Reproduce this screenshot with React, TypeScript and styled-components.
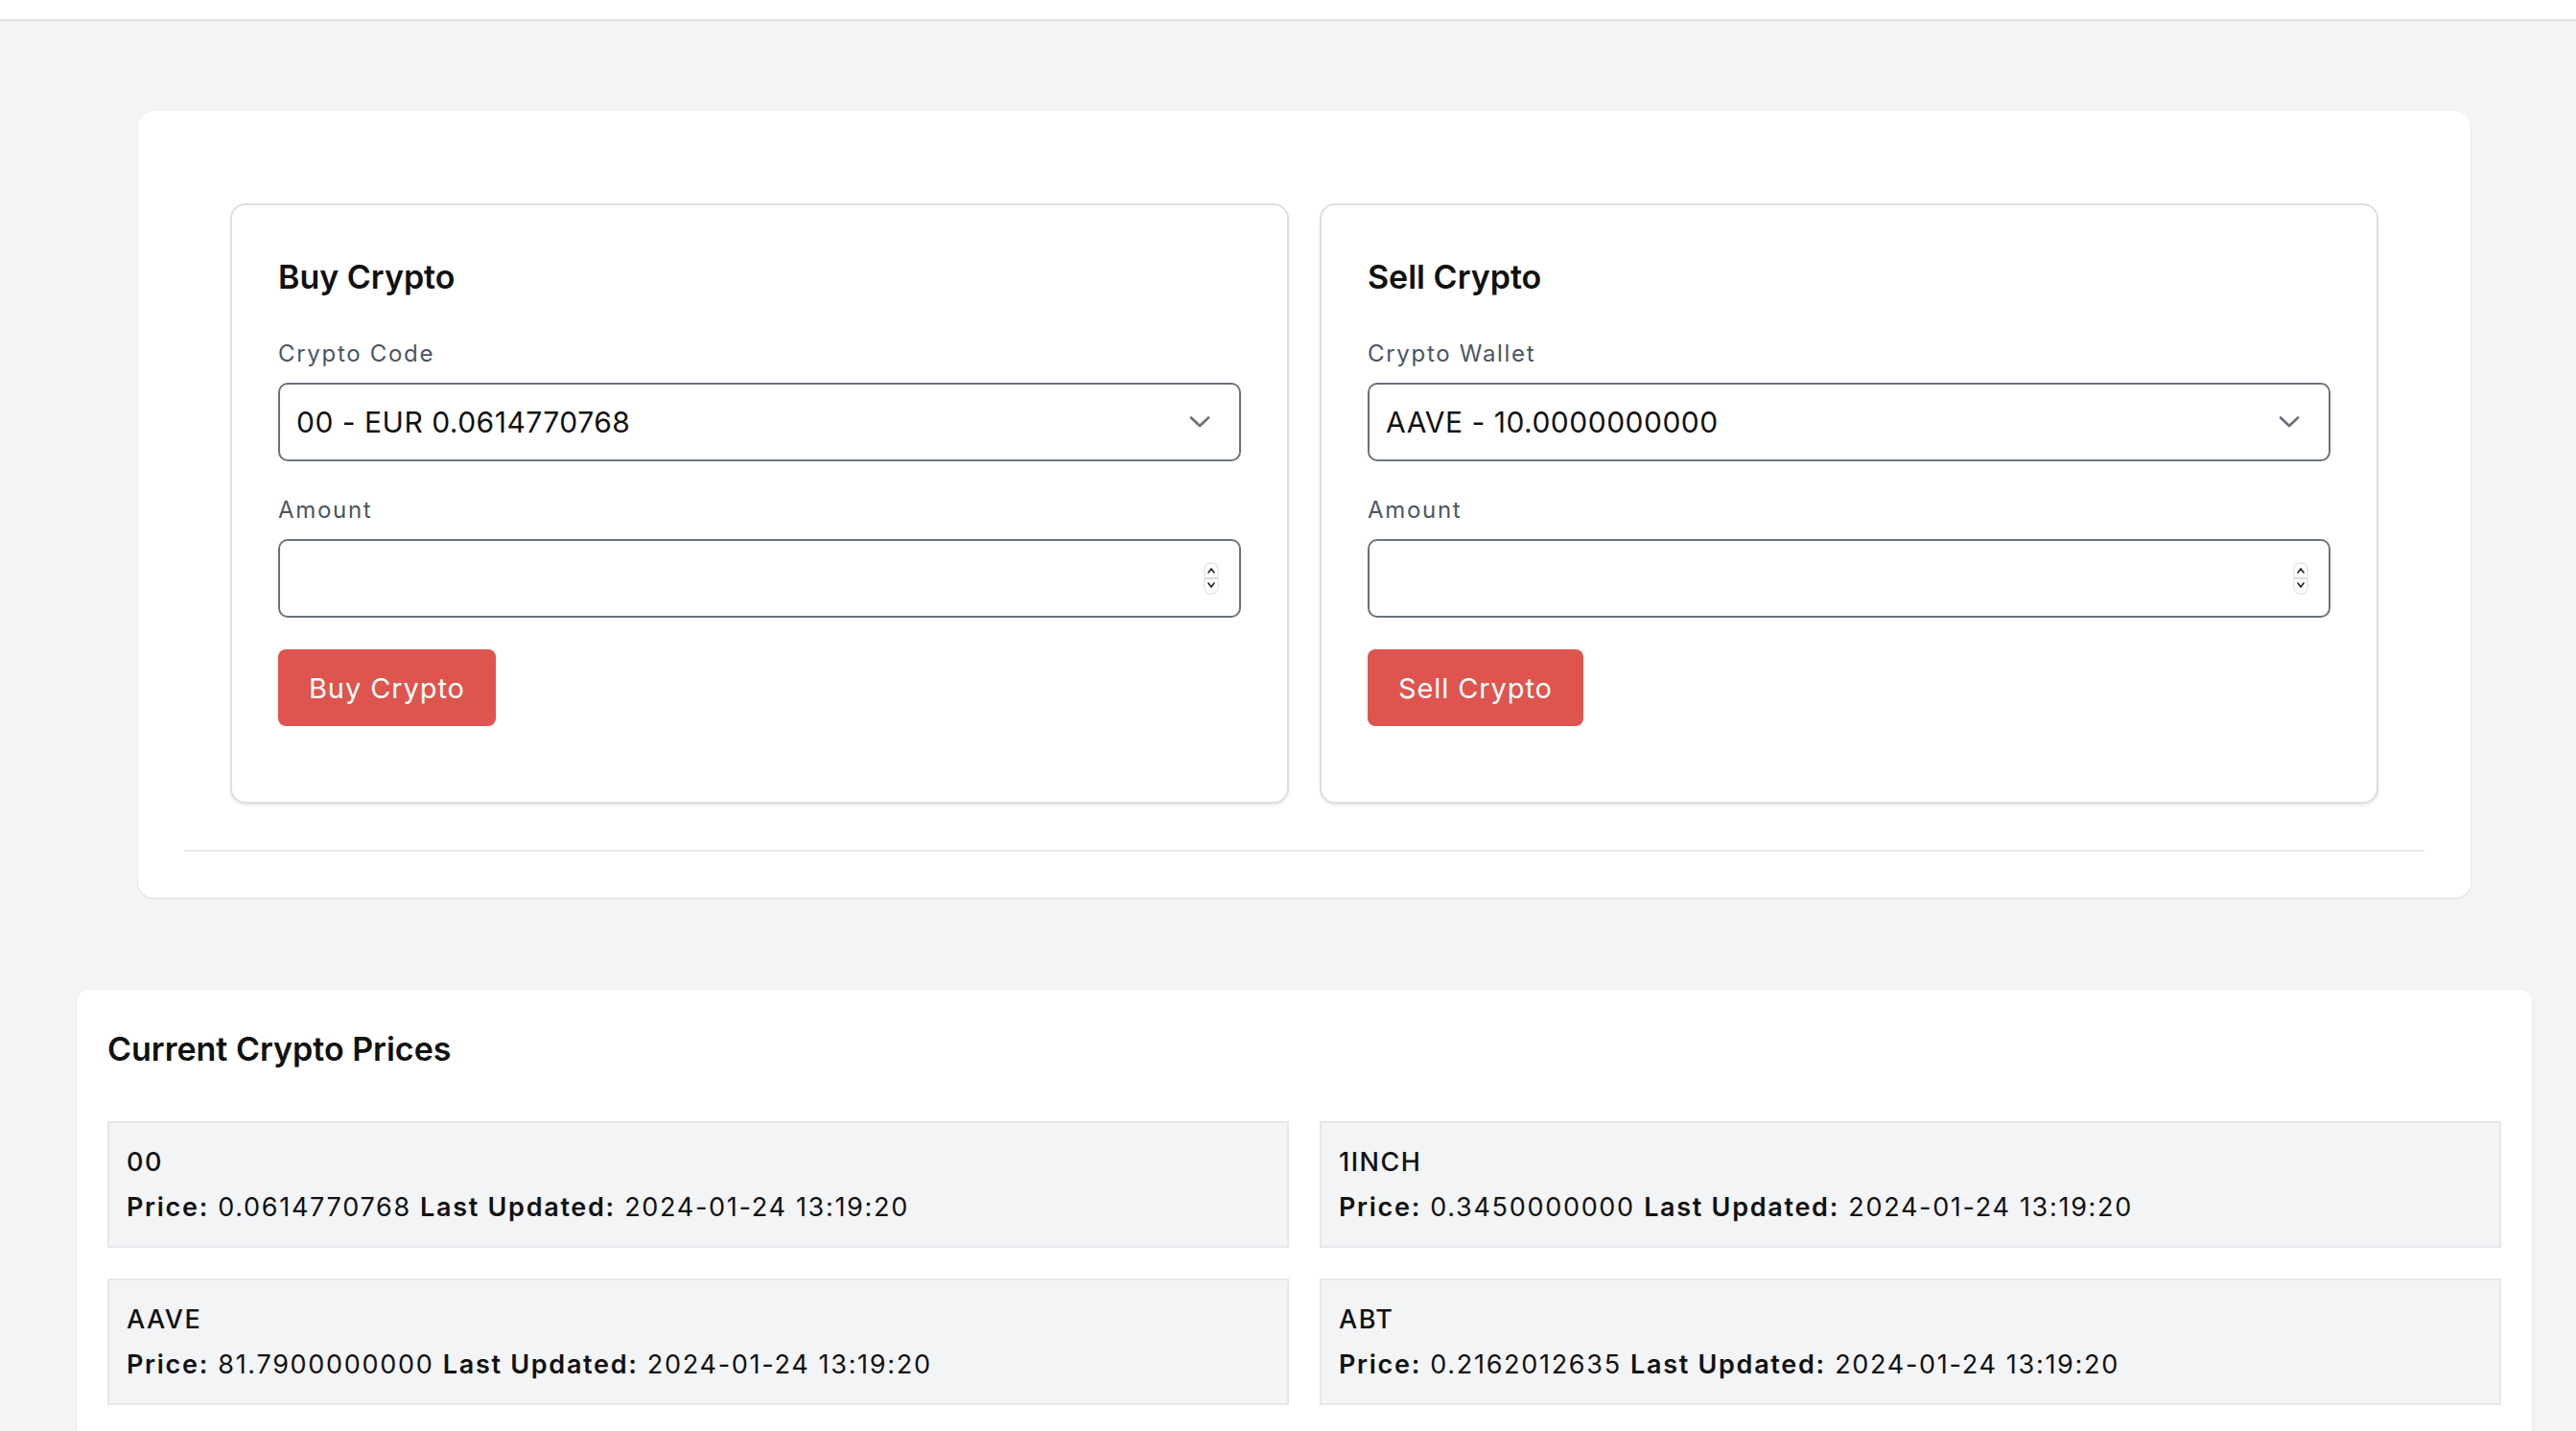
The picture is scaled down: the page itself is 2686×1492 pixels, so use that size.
import React from "react";
import styled, { createGlobalStyle } from "styled-components";

const GlobalStyle = createGlobalStyle`
  html, body {
    margin: 0;
    padding: 0;
    background: #f3f4f6;
    font-family: Inter, "Noto Sans", "Liberation Sans", sans-serif;
    color: #111827;
    overflow-x: hidden;
  }
  * { box-sizing: border-box; }
`;

const Page = styled.div`
  width: 2720px;
  min-height: 1492px;
  background: #f3f4f6;
`;

const TopBar = styled.header`
  height: 20px;
  background: #ffffff;
  box-shadow: 0 1px 3px rgba(0, 0, 0, 0.12), 0 1px 2px rgba(0, 0, 0, 0.06);
`;

const Main = styled.main`
  display: flex;
  flex-direction: column;
  align-items: center;
  gap: 96px;
  padding-top: 96px;
`;

const TradeCard = styled.section`
  width: 2432px;
  background: #ffffff;
  border-radius: 16px;
  padding: 48px;
  box-shadow: 0 1px 3px rgba(0, 0, 0, 0.08), 0 1px 2px rgba(0, 0, 0, 0.04);
`;

const TradeGrid = styled.div`
  display: grid;
  grid-template-columns: 1fr 1fr;
  gap: 32px;
  padding: 48px 48px 0;
`;

const Divider = styled.hr`
  margin: 48px 0 0;
  border: none;
  height: 2px;
  background: #e5e7eb;
`;

const FormCard = styled.div`
  border: 2px solid #dcdee3;
  border-radius: 16px;
  padding: 48px 48px 79px;
  background: #ffffff;
  box-shadow: 0 2px 3px rgba(0, 0, 0, 0.08);
  display: flex;
  flex-direction: column;
`;

const FormTitle = styled.h2`
  margin: 0;
  font-size: 34px;
  line-height: 54px;
  font-weight: 600;
  color: #111111;
`;

const Label = styled.label<{ $first?: boolean }>`
  display: block;
  margin-top: ${(p) => (p.$first ? "36px" : "34px")};
  margin-bottom: 13px;
  font-size: 24px;
  line-height: 34px;
  letter-spacing: 1.7px;
  color: #4b5563;
`;

const FieldBox = styled.div`
  display: flex;
  align-items: center;
  height: 82px;
  border: 2px solid #6b7280;
  border-radius: 10px;
  padding: 0 21px 0 17px;
  background: #ffffff;
`;

const SelectInput = styled.select`
  flex: 1;
  appearance: none;
  -webkit-appearance: none;
  border: none;
  outline: none;
  background: transparent;
  font-family: inherit;
  font-size: 30px;
  letter-spacing: 0.5px;
  color: #111111;
  padding: 0;
  height: 100%;
`;

const NumberInput = styled.input`
  flex: 1;
  border: none;
  outline: none;
  background: transparent;
  font-family: inherit;
  font-size: 30px;
  height: 100%;
  padding: 0;
  &::-webkit-inner-spin-button,
  &::-webkit-outer-spin-button {
    -webkit-appearance: none;
    margin: 0;
  }
`;

const Chevron = styled.svg`
  width: 24px;
  height: 14px;
  margin-right: 8px;
  flex-shrink: 0;
`;

const Spinner = styled.svg`
  width: 16px;
  height: 34px;
  flex-shrink: 0;
`;

const ActionButton = styled.button`
  align-self: flex-start;
  margin-top: 33px;
  height: 80px;
  padding: 0 32px;
  border: none;
  border-radius: 8px;
  background: #de544e;
  color: #ffffff;
  font-family: inherit;
  font-size: 29px;
  letter-spacing: 0.9px;
  font-weight: 400;
  cursor: pointer;
`;

const PricesCard = styled.section`
  width: 2560px;
  background: #ffffff;
  border-radius: 12px 12px 0 0;
  padding: 38px 32px 40px;
  box-shadow: 0 1px 3px rgba(0, 0, 0, 0.08), 0 1px 2px rgba(0, 0, 0, 0.04);
`;

const PricesTitle = styled.h2`
  margin: 0 0 51px;
  font-size: 34px;
  line-height: 48px;
  font-weight: 600;
  color: #111111;
`;

const PriceGrid = styled.div`
  display: grid;
  grid-template-columns: 1fr 1fr;
  gap: 32px;
`;

const PriceItem = styled.div`
  background: #f3f4f6;
  border: 2px solid #e5e7eb;
  padding: 20px 18px;
  display: flex;
  flex-direction: column;
  gap: 6px;
`;

const CoinName = styled.div`
  font-size: 27px;
  line-height: 41px;
  letter-spacing: 1.5px;
  font-weight: 500;
  color: #111111;
`;

const PriceLine = styled.div`
  font-size: 27px;
  line-height: 41px;
  letter-spacing: 1.7px;
  color: #111111;
  white-space: nowrap;
`;

const Strong = styled.strong`
  font-weight: 600;
`;

const ChevronDown = () => (
  <Chevron viewBox="0 0 24 14" fill="none">
    <path d="M3 2.5 L12 11 L21 2.5" stroke="#6b7280" strokeWidth="2.8" strokeLinecap="round" strokeLinejoin="round" />
  </Chevron>
);

const SpinnerIcon = () => (
  <Spinner viewBox="0 0 16 34" fill="none">
    <rect x="0.75" y="0.75" width="14.5" height="32.5" rx="7" fill="#ffffff" stroke="#e5e7eb" strokeWidth="1.5" />
    <line x1="1.5" y1="17" x2="14.5" y2="17" stroke="#d8dadf" strokeWidth="2" />
    <path d="M5 11 L8 7 L11 11" stroke="#222" strokeWidth="1.6" strokeLinecap="round" strokeLinejoin="round" />
    <path d="M5 22 L8 26 L11 22" stroke="#222" strokeWidth="1.6" strokeLinecap="round" strokeLinejoin="round" />
  </Spinner>
);

type TradeFormProps = {
  title: string;
  selectLabel: string;
  option: string;
  button: string;
};

const TradeForm = ({ title, selectLabel, option, button }: TradeFormProps) => (
  <FormCard>
    <FormTitle>{title}</FormTitle>
    <Label $first>{selectLabel}</Label>
    <FieldBox>
      <SelectInput defaultValue={option}>
        <option value={option}>{option}</option>
      </SelectInput>
      <ChevronDown />
    </FieldBox>
    <Label>Amount</Label>
    <FieldBox>
      <NumberInput type="number" />
      <SpinnerIcon />
    </FieldBox>
    <ActionButton>{button}</ActionButton>
  </FormCard>
);

const prices = [
  { code: "00", price: "0.0614770768" },
  { code: "1INCH", price: "0.3450000000" },
  { code: "AAVE", price: "81.7900000000" },
  { code: "ABT", price: "0.2162012635" },
];

export default function App() {
  return (
    <>
      <GlobalStyle />
      <Page>
        <TopBar />
        <Main>
          <TradeCard>
            <TradeGrid>
              <TradeForm title="Buy Crypto" selectLabel="Crypto Code" option="00 - EUR 0.0614770768" button="Buy Crypto" />
              <TradeForm title="Sell Crypto" selectLabel="Crypto Wallet" option="AAVE - 10.0000000000" button="Sell Crypto" />
            </TradeGrid>
            <Divider />
          </TradeCard>
          <PricesCard>
            <PricesTitle>Current Crypto Prices</PricesTitle>
            <PriceGrid>
              {prices.map((p) => (
                <PriceItem key={p.code}>
                  <CoinName>{p.code}</CoinName>
                  <PriceLine>
                    <Strong>Price:</Strong> {p.price} <Strong>Last Updated:</Strong> 2024-01-24 13:19:20
                  </PriceLine>
                </PriceItem>
              ))}
            </PriceGrid>
          </PricesCard>
        </Main>
      </Page>
    </>
  );
}
